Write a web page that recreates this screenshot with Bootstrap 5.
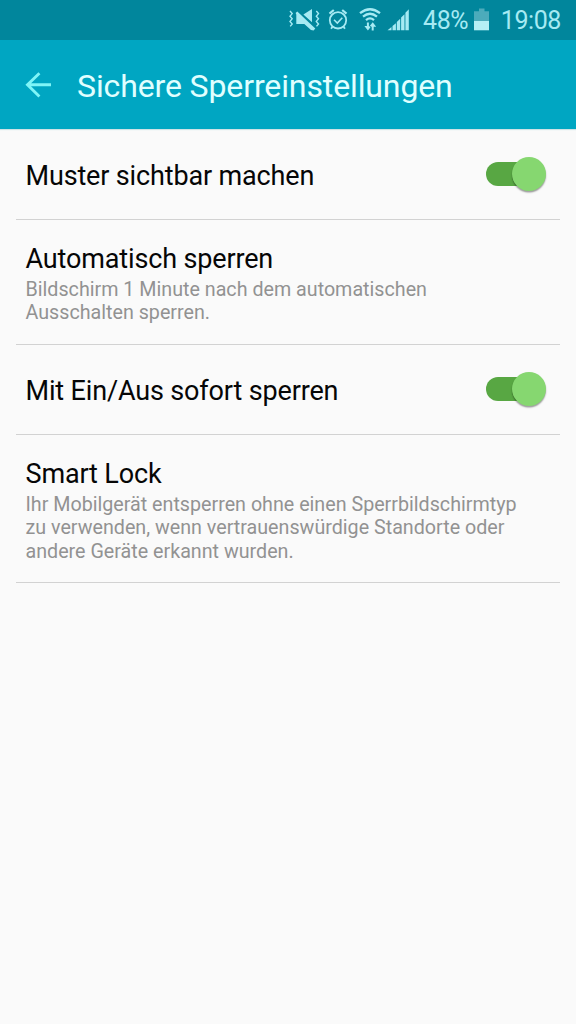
<!DOCTYPE html>
<html lang="de">
<head>
<meta charset="utf-8">
<meta name="viewport" content="width=device-width, initial-scale=1">
<title>Sichere Sperreinstellungen</title>
<link href="https://cdn.jsdelivr.net/npm/bootstrap@5.3.0/dist/css/bootstrap.min.css" rel="stylesheet">
<style>
  body { font-family: Roboto, sans-serif; background: #fafafa; color: #060606; min-height: 100vh; }
  .statusbar { height: 40px; background: #01869c; color: #a6eaf3; font-size: 25px; letter-spacing: -.4px; line-height: 40px; padding-right: 15px; }
  .statusbar svg { display: block; flex: none; }
  .statusbar span { white-space: nowrap; flex: none; padding-top: 2px; }
  .appbar { height: 89px; background: #00a6c2; padding-left: 25px; box-shadow: 0 1px 1px #cfe3e6; }
  .appbar h1 { font-size: 32px; font-weight: 400; letter-spacing: -.12px; color: #e0ffff; line-height: 40px; margin: 3px 0 0 26px; white-space: nowrap; }
  .settings { margin: 1px 16px 0; }
  .setting { border-bottom: 1px solid #d2d2d2; padding: 0 14px 0 9.5px; }
  .setting-toggle { height: 90px; }
  .setting-title { font-size: 27px; font-weight: 400; letter-spacing: -.15px; line-height: 32px; margin: 0; white-space: nowrap; }
  .setting-toggle .setting-title { padding-top: 2px; }
  .setting-note { font-size: 19.7px; line-height: 23.3px; color: #929292; margin: 3px 0 0; white-space: nowrap; }
  .setting-text { padding-top: 23px; }
  .two-lines { height: 125px; }
  .three-lines { height: 148px; }
  .switch { width: 60px; height: 24px; flex: none; background: linear-gradient(#58a743, #58a743) 0 0 / 45px 24px no-repeat; border-radius: 12px; margin-bottom: 1px; }
  .knob { width: 34px; height: 34px; background: #86d770; box-shadow: 0 1.5px 1.5px rgba(0,0,0,.38); }
</style>
</head>
<body>
<header>
  <div class="statusbar d-flex align-items-center justify-content-end">
    <svg width="32" height="24" viewBox="288 8 32 24" fill="#a6eaf3">
      <path d="M312 9v13.2L303.4 14.4zM295.6 13l1.7-1.6L315.3 28.6l-1.7 2L311 30l-6.7-6h-8v-9.6z"/>
      <path d="M290 11l2.2 2.6-2.2 2.6 2.2 2.6-2.2 2.6 2.2 2.6-2 2.4M316.3 11l2.2 2.6-2.2 2.6 2.2 2.6-2.2 2.6 2.2 2.6-2 2.4" fill="none" stroke="#a6eaf3" stroke-width="1.4"/>
    </svg>
    <svg class="ms-2" width="20" height="24" viewBox="328 8 20 24" fill="none" stroke="#a6eaf3">
      <circle cx="338" cy="20.3" r="8.2" stroke-width="1.8"/>
      <path d="M329.5 13.6l4.3-3.6M346.5 13.6l-4.3-3.6" stroke-width="2.2"/>
      <path d="M334 19.8l3.3 3.2 5-5.2" stroke-width="1.6"/>
      <path d="M332.7 26.2l-1.6 2.6M343.3 26.2l1.6 2.6" stroke-width="1.8"/>
    </svg>
    <svg style="margin-left:11px" width="22" height="24" viewBox="359 8 22 24" fill="none" stroke="#a6eaf3" stroke-width="2.3">
      <path d="M360 13.2q10-8 20 0M363 16.7q7-5.8 14 0M366 20.1q4-3.4 8 0"/>
      <path d="M367.9 22.4v5M372.7 30.4v-5" stroke-width="2"/>
      <path d="M364.4 26h7l-3.5 4.5zM369.2 26.7h7l-3.5-4.5z" fill="#a6eaf3" stroke="none"/>
    </svg>
    <svg style="margin-left:6px" width="22" height="24" viewBox="387 8 22 24" fill="#a6eaf3">
      <path d="M387.5 30.2l4-3.2v3.2zM392.5 26l3.4-2.8v7h-3.4zM396.8 22l3.4-3.2v11.4h-3.4zM401.1 17.6l3.4-3.3v15.9h-3.4zM405.4 12.7l3.4-3.5v21h-3.4z"/>
    </svg>
    <span style="margin-left:14px">48%</span>
    <svg style="margin-left:6px" width="15" height="24" viewBox="474 8 15 24">
      <path d="M479 8.5h5.5v2.8h4.5V21h-15v-9.7h5z" fill="#4cabbb"/>
      <path d="M474 21h15v9.3h-15z" fill="#b5eff5"/>
    </svg>
    <span style="margin-left:11.5px">19:08</span>
  </div>
  <nav class="appbar d-flex align-items-center" aria-label="Titelleiste">
    <svg class="flex-shrink-0" width="26" height="26" viewBox="25 72 26 26" fill="none" stroke="#7ff5f7" stroke-width="2.9"><path d="M51 84.8H28M39.4 73.2L27.5 84.8l11.9 11.7"/></svg>
    <h1>Sichere Sperreinstellungen</h1>
  </nav>
</header>
<main class="settings">
  <section class="setting setting-toggle d-flex align-items-center justify-content-between">
    <h2 class="setting-title">Muster sichtbar machen</h2>
    <div class="switch d-flex align-items-center justify-content-end" role="switch" aria-checked="true"><div class="knob rounded-circle flex-shrink-0"></div></div>
  </section>
  <section class="setting setting-text two-lines">
    <h2 class="setting-title">Automatisch sperren</h2>
    <p class="setting-note">Bildschirm 1 Minute nach dem automatischen<br>Ausschalten sperren.</p>
  </section>
  <section class="setting setting-toggle d-flex align-items-center justify-content-between">
    <h2 class="setting-title">Mit Ein/Aus sofort sperren</h2>
    <div class="switch d-flex align-items-center justify-content-end" role="switch" aria-checked="true"><div class="knob rounded-circle flex-shrink-0"></div></div>
  </section>
  <section class="setting setting-text three-lines">
    <h2 class="setting-title">Smart Lock</h2>
    <p class="setting-note">Ihr Mobilgerät entsperren ohne einen Sperrbildschirmtyp<br>zu verwenden, wenn vertrauenswürdige Standorte oder<br>andere Geräte erkannt wurden.</p>
  </section>
</main>
<script src="https://cdn.jsdelivr.net/npm/bootstrap@5.3.0/dist/js/bootstrap.bundle.min.js"></script>
</body>
</html>
